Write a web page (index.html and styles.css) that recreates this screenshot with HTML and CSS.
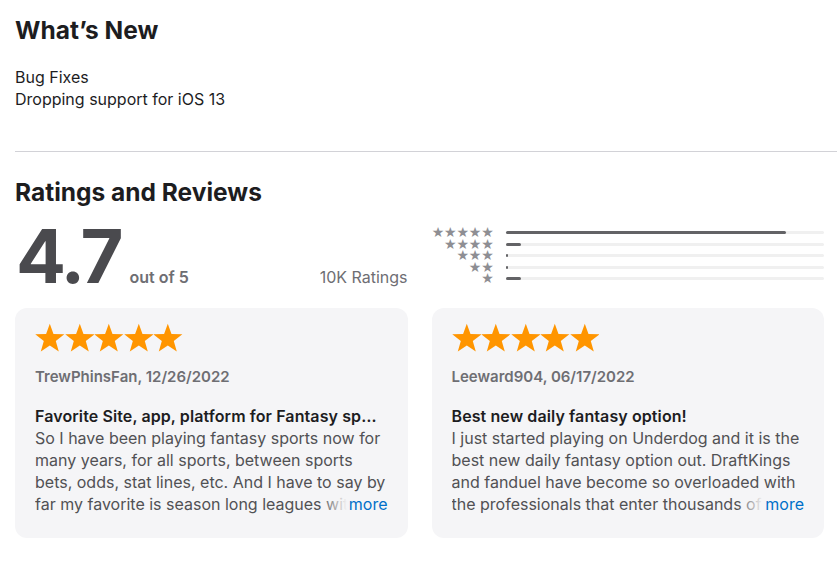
FILE: index.html
```html
<!DOCTYPE html>
<html>
<head>
  <title>Ratings and Reviews</title>
  <link rel="stylesheet" href="styles.css">
</head>
<body>
  <section class="whats-new">
    <h2 class="section-title">What’s New</h2>
    <p class="notes">Bug Fixes<br>Dropping support for iOS 13</p>
  </section>

  <hr class="divider">

  <section class="ratings">
    <h2 class="section-title">Ratings and Reviews</h2>

    <div class="summary">
      <div class="score">
        <span class="score-value">4.7</span>
        <span class="score-out">out of 5</span>
        <span class="score-count">10K Ratings</span>
      </div>

      <div class="histogram">
        <div class="hist-row">
          <span class="hist-stars">★★★★★</span>
          <span class="hist-track"><span class="hist-fill" style="width: 88%"></span></span>
        </div>
        <div class="hist-row">
          <span class="hist-stars">★★★★</span>
          <span class="hist-track"><span class="hist-fill" style="width: 5%"></span></span>
        </div>
        <div class="hist-row">
          <span class="hist-stars">★★★</span>
          <span class="hist-track"><span class="hist-fill" style="width: 0.8%"></span></span>
        </div>
        <div class="hist-row">
          <span class="hist-stars">★★</span>
          <span class="hist-track"><span class="hist-fill" style="width: 0.8%"></span></span>
        </div>
        <div class="hist-row">
          <span class="hist-stars">★</span>
          <span class="hist-track"><span class="hist-fill" style="width: 5%"></span></span>
        </div>
      </div>
    </div>

    <div class="reviews">
      <div class="review-card">
        <div class="review-stars">
          <svg viewBox="0 0 29.6 30"><polygon points="14.8,0.8 18.5,11 29.35,11.37 20.79,18.05 23.8,28.48 14.8,22.4 5.8,28.48 8.81,18.05 0.25,11.37 11.1,11"/></svg>
          <svg viewBox="0 0 29.6 30"><polygon points="14.8,0.8 18.5,11 29.35,11.37 20.79,18.05 23.8,28.48 14.8,22.4 5.8,28.48 8.81,18.05 0.25,11.37 11.1,11"/></svg>
          <svg viewBox="0 0 29.6 30"><polygon points="14.8,0.8 18.5,11 29.35,11.37 20.79,18.05 23.8,28.48 14.8,22.4 5.8,28.48 8.81,18.05 0.25,11.37 11.1,11"/></svg>
          <svg viewBox="0 0 29.6 30"><polygon points="14.8,0.8 18.5,11 29.35,11.37 20.79,18.05 23.8,28.48 14.8,22.4 5.8,28.48 8.81,18.05 0.25,11.37 11.1,11"/></svg>
          <svg viewBox="0 0 29.6 30"><polygon points="14.8,0.8 18.5,11 29.35,11.37 20.79,18.05 23.8,28.48 14.8,22.4 5.8,28.48 8.81,18.05 0.25,11.37 11.1,11"/></svg>
        </div>
        <div class="review-author">TrewPhinsFan, 12/26/2022</div>
        <div class="review-title">Favorite Site, app, platform for Fantasy sports</div>
        <div class="review-body">
          <p>So I have been playing fantasy sports now for many years, for all sports, between sports bets, odds, stat lines, etc. And I have to say by far my favorite is season long leagues with friends and family.</p>
          <span class="more">more</span>
        </div>
      </div>

      <div class="review-card">
        <div class="review-stars">
          <svg viewBox="0 0 29.6 30"><polygon points="14.8,0.8 18.5,11 29.35,11.37 20.79,18.05 23.8,28.48 14.8,22.4 5.8,28.48 8.81,18.05 0.25,11.37 11.1,11"/></svg>
          <svg viewBox="0 0 29.6 30"><polygon points="14.8,0.8 18.5,11 29.35,11.37 20.79,18.05 23.8,28.48 14.8,22.4 5.8,28.48 8.81,18.05 0.25,11.37 11.1,11"/></svg>
          <svg viewBox="0 0 29.6 30"><polygon points="14.8,0.8 18.5,11 29.35,11.37 20.79,18.05 23.8,28.48 14.8,22.4 5.8,28.48 8.81,18.05 0.25,11.37 11.1,11"/></svg>
          <svg viewBox="0 0 29.6 30"><polygon points="14.8,0.8 18.5,11 29.35,11.37 20.79,18.05 23.8,28.48 14.8,22.4 5.8,28.48 8.81,18.05 0.25,11.37 11.1,11"/></svg>
          <svg viewBox="0 0 29.6 30"><polygon points="14.8,0.8 18.5,11 29.35,11.37 20.79,18.05 23.8,28.48 14.8,22.4 5.8,28.48 8.81,18.05 0.25,11.37 11.1,11"/></svg>
        </div>
        <div class="review-author">Leeward904, 06/17/2022</div>
        <div class="review-title">Best new daily fantasy option!</div>
        <div class="review-body">
          <p>I just started playing on Underdog and it is the best new daily fantasy option out. DraftKings and fanduel have become so overloaded with the professionals that enter thousands of lineups every single day.</p>
          <span class="more">more</span>
        </div>
      </div>
    </div>
  </section>
</body>
</html>
```

FILE: styles.css
```css
body {
  margin: 0;
  padding: 0 1px 0 15px;
  font-family: Inter, "Noto Sans", sans-serif;
  color: #1d1d1f;
  background: #fff;
}

.section-title {
  margin: 0;
  font-size: 24.5px;
  line-height: 30px;
  font-weight: 700;
  color: #1d1d1f;
}

.whats-new {
  padding-top: 15px;
}

.notes {
  margin: 21px 0 0;
  font-size: 16px;
  line-height: 22px;
  color: #1d1d1f;
}

.divider {
  margin: 41px 0 0;
  border: none;
  border-top: 1px solid #d2d2d7;
}

.ratings {
  padding-top: 25px;
  padding-right: 13px;
}

.summary {
  display: grid;
  grid-template-columns: minmax(0, 1fr) minmax(0, 1fr);
  column-gap: 24px;
  margin-top: 16px;
  height: 66px;
}

.score {
  display: flex;
  align-items: baseline;
  color: #4a4a4e;
}

.score-value {
  font-size: 74px;
  line-height: 66px;
  font-weight: 700;
  letter-spacing: -3px;
  margin-left: 1px;
}

.score-out {
  margin-left: 9px;
  font-size: 16px;
  font-weight: 600;
  color: #6e6e73;
}

.score-count {
  margin-left: auto;
  font-size: 16px;
  color: #6e6e73;
}

.histogram {
  display: flex;
  flex-direction: column;
  padding-top: 4px;
}

.hist-row {
  display: flex;
  align-items: center;
  gap: 12px;
  height: 11.5px;
}

.hist-stars {
  width: 62px;
  text-align: right;
  font-size: 14px;
  line-height: 11px;
  letter-spacing: -0.2px;
  color: #8e8e93;
  font-family: "DejaVu Sans", sans-serif;
}

.hist-track {
  flex: 1;
  height: 3px;
  border-radius: 2px;
  background: #f0f0f0;
}

.hist-fill {
  display: block;
  height: 3px;
  min-width: 2px;
  border-radius: 2px;
  background: #636366;
}

.reviews {
  display: grid;
  grid-template-columns: minmax(0, 1fr) minmax(0, 1fr);
  gap: 24px;
  margin-top: 19px;
}

.review-card {
  min-width: 0;
  background: #f5f5f7;
  border-radius: 12px;
  padding: 15px 20px 0;
  height: 230px;
  box-sizing: border-box;
}

.review-stars {
  display: flex;
  height: 30px;
}

.review-stars svg {
  width: 29.6px;
  height: 30px;
  fill: #ff9500;
}

.review-author {
  margin-top: 14px;
  font-size: 15px;
  line-height: 20px;
  font-weight: 600;
  color: #6e6e73;
}

.review-title {
  margin-top: 18px;
  padding-right: 3px;
  font-size: 16px;
  line-height: 22px;
  font-weight: 600;
  letter-spacing: 0.1px;
  color: #1d1d1f;
  white-space: nowrap;
  overflow: hidden;
  text-overflow: ellipsis;
}

.review-body {
  position: relative;
  font-size: 16px;
  line-height: 22px;
  color: #515154;
}

.review-body p {
  margin: 0;
  max-height: 88px;
  overflow: hidden;
}

.more {
  position: absolute;
  right: 0;
  bottom: 0;
  padding-left: 28px;
  color: #0070c9;
  background: linear-gradient(to right, rgba(245, 245, 247, 0), #f5f5f7 26px);
}
```
